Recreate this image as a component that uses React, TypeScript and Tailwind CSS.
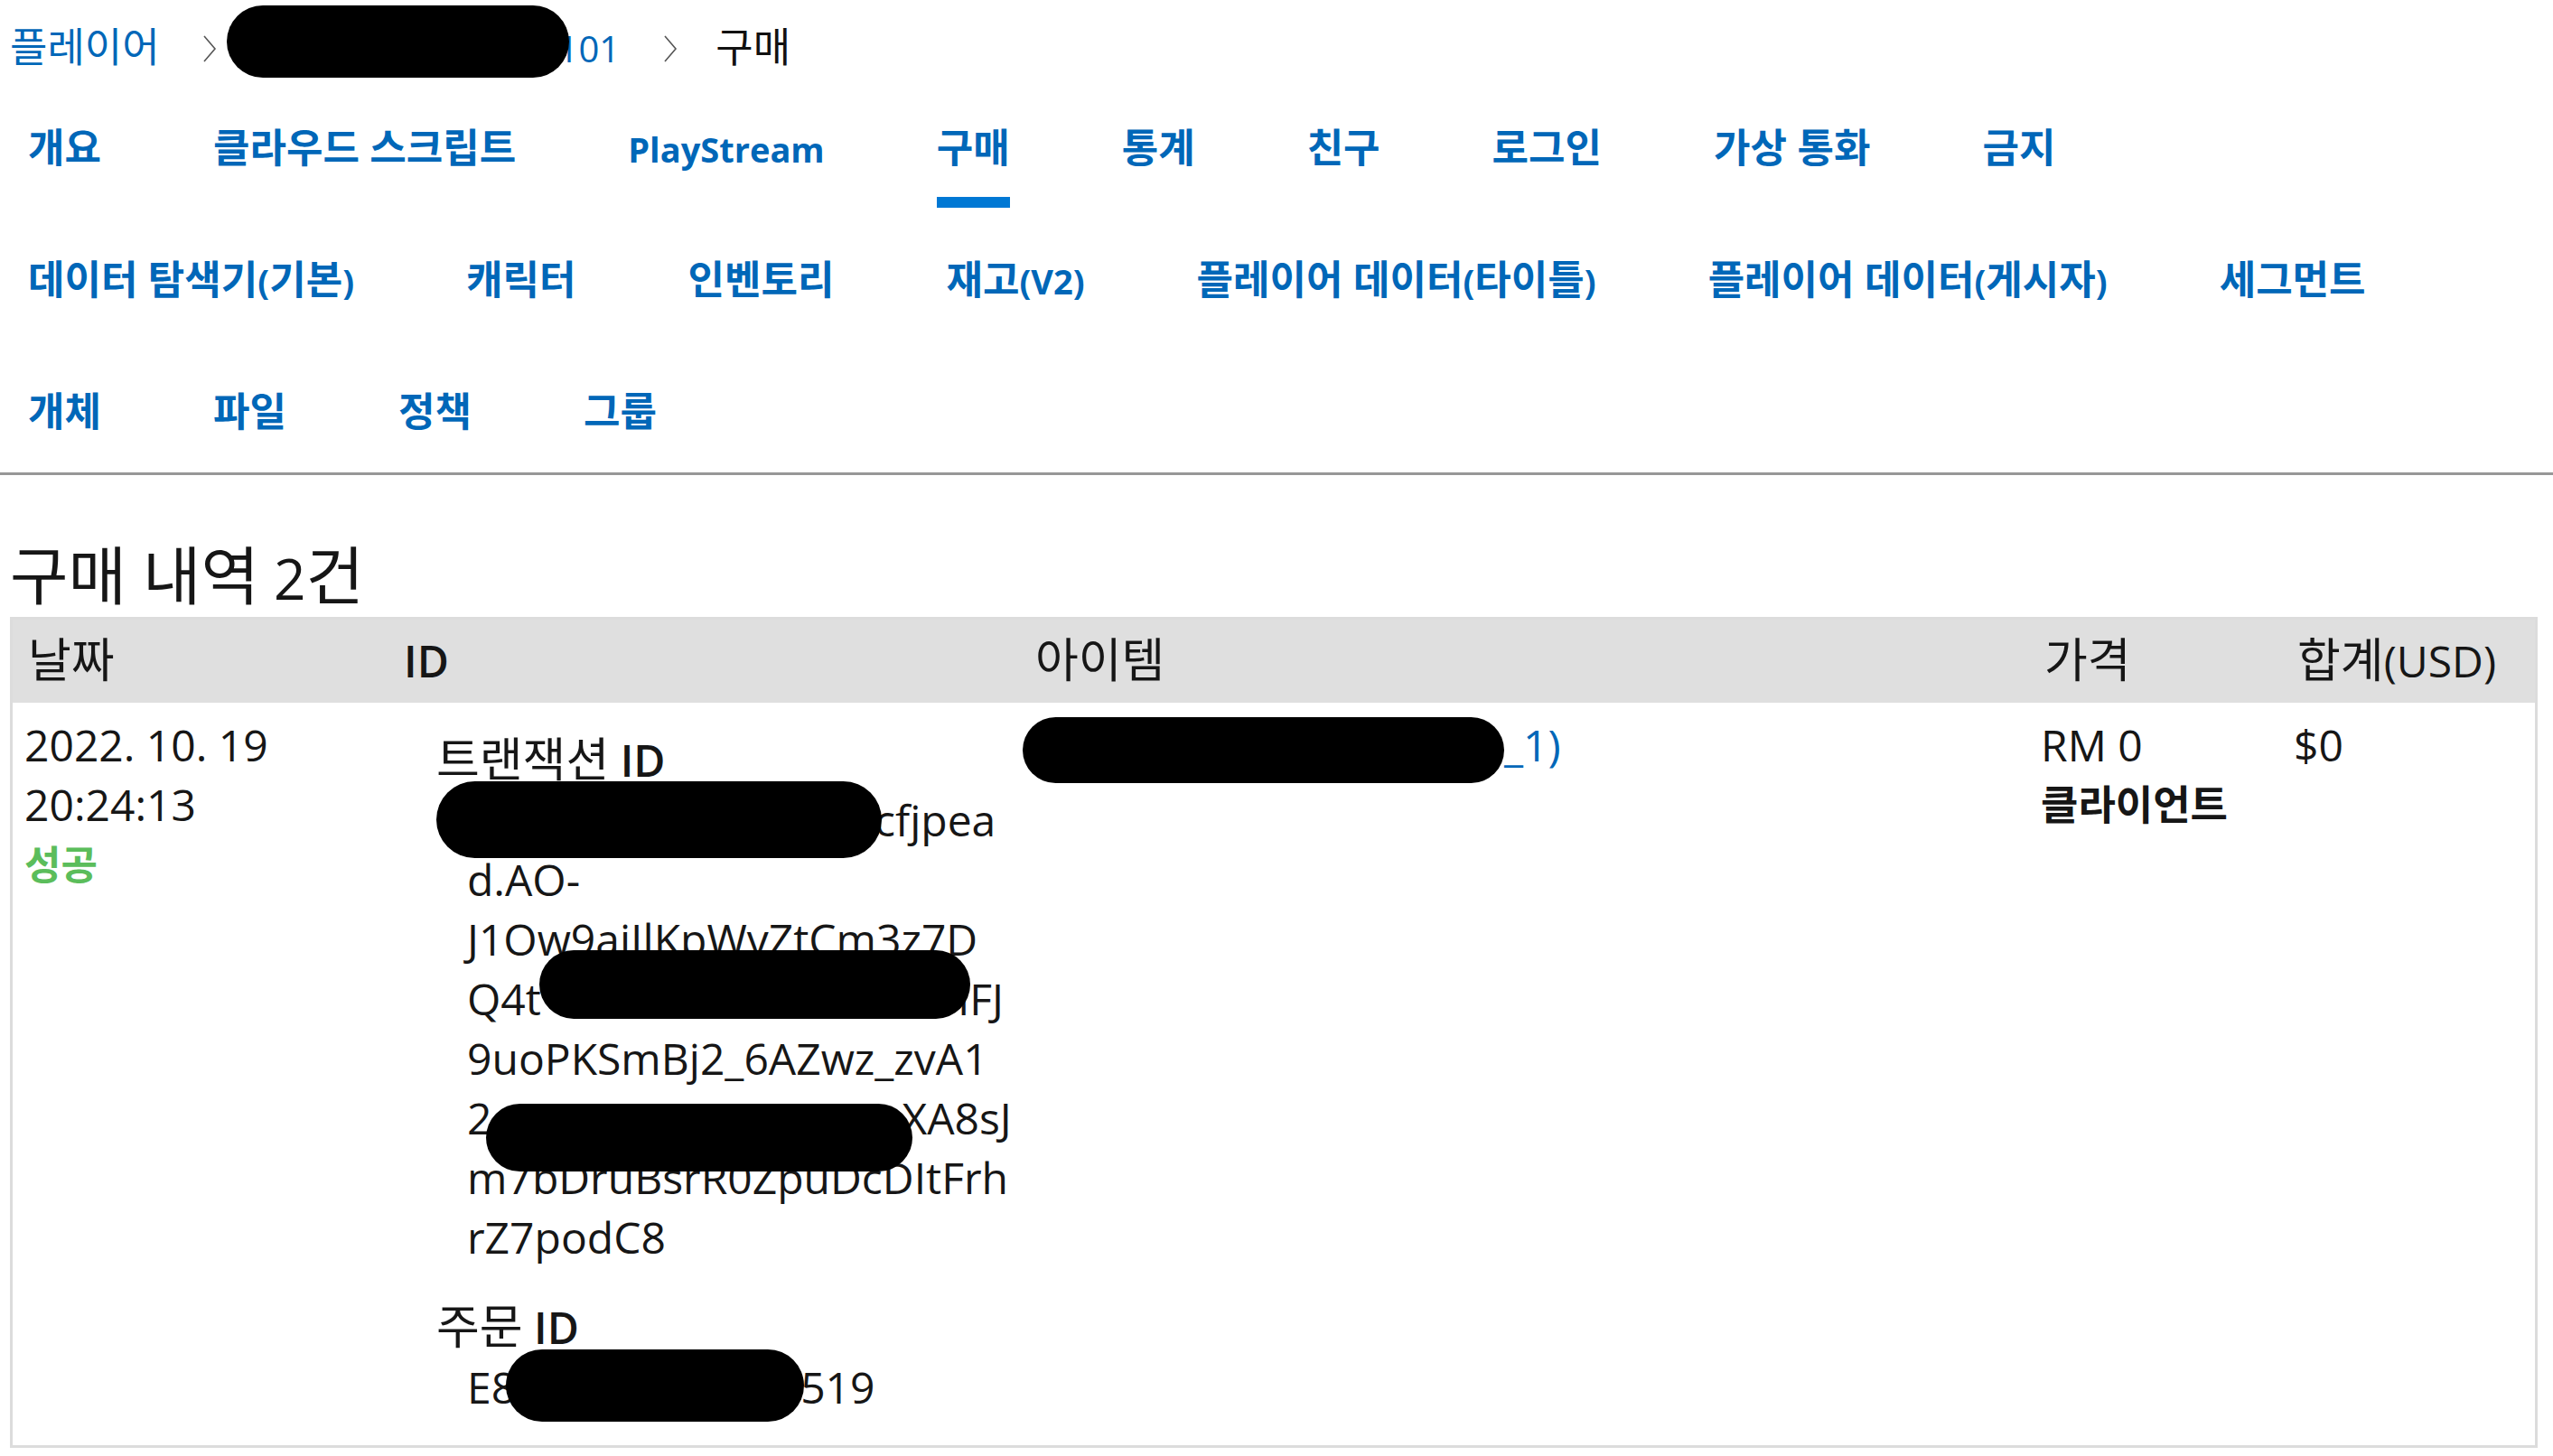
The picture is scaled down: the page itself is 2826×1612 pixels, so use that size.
import React from "react";

const navRows: string[][] = [
  ["개요", "클라우드 스크립트", "PlayStream", "구매", "통계", "친구", "로그인", "가상 통화", "금지"],
  ["데이터 탐색기(기본)", "캐릭터", "인벤토리", "재고(V2)", "플레이어 데이터(타이틀)", "플레이어 데이터(게시자)", "세그먼트"],
  ["개체", "파일", "정책", "그룹"],
];

const activeTab = "구매";

// Hangul glyphs are set a bit larger than the latin ones, as in the original UI font pair
const Mixed = ({ text, hangul }: { text: string; hangul: string }) => (
  <>
    {text.split(/([\uAC00-\uD7A3]+(?: [\uAC00-\uD7A3]+)*)/).map((part, i) =>
      /[\uAC00-\uD7A3]/.test(part) ? (
        <span key={i} className={"leading-none " + hangul}>
          {part}
        </span>
      ) : (
        part
      )
    )}
  </>
);

const Ko = ({ text }: { text: string }) => <Mixed text={text} hangul="text-[1.083em]" />;

// black marker used to hide personal data in the screenshot
const Redact = ({ className }: { className: string }) => (
  <span aria-hidden className={"relative inline-block align-middle bg-black rounded-full " + className} />
);

const Chevron = () => (
  <svg width="16" height="32" viewBox="0 0 16 32" className="shrink-0">
    <polyline points="2,2 14,16 2,30" fill="none" stroke="#555" strokeWidth="1.6" />
  </svg>
);

const Breadcrumb = () => (
  <div className="flex items-center h-[92px] pt-[16px] pl-[11px] text-[40px] leading-[56px]">
    <a className="text-[#0067b8]">
      <Mixed text="플레이어" hangul="text-[1.125em]" />
    </a>
    <span className="ml-[47px] mr-[48px] flex">
      <Chevron />
    </span>
    <a className="text-[#0067b8] whitespace-nowrap">
      <Redact className="w-[379px] h-[80px] my-[-20px] ml-[-37px] mr-[-12px] top-[-12px]" />
      101
    </a>
    <span className="ml-[48px] mr-[42px] flex">
      <Chevron />
    </span>
    <span className="text-[#111]">
      <Mixed text="구매" hangul="text-[1.125em]" />
    </span>
  </div>
);

const Tabs = () => (
  <nav className="border-b-[3px] border-[#979797] pb-[1px]">
    <div className="flex flex-col gap-[8px] pl-[11px]">
      {navRows.map((row, r) => (
        <div key={r} className="flex gap-[84px]">
          {row.map((label) => (
            <a
              key={label}
              className="flex flex-col h-[138px] px-[20px] pt-[45px] text-[38px] leading-[56px] font-bold text-[#0067b8] whitespace-nowrap cursor-pointer"
            >
              <span>
                <Mixed text={label} hangul="text-[1.158em]" />
              </span>
              <span className={"mt-auto h-[12px] " + (label === activeTab ? "bg-[#0078d4]" : "bg-transparent")} />
            </a>
          ))}
        </div>
      ))}
    </div>
  </nav>
);

const PurchaseTable = () => (
  <table className="table-fixed w-[2798px] border-separate border-spacing-0 border-[3px] border-[#dcdcdc] text-[48px] leading-[66px] text-[#161616]">
    <colgroup>
      <col className="w-[416px]" />
      <col className="w-[699px]" />
      <col className="w-[1117px]" />
      <col className="w-[280px]" />
      <col className="w-[280px]" />
    </colgroup>
    <thead>
      <tr className="bg-[#dfdfdf]">
        <th className="text-left font-normal pl-[17px] py-[13px]">
          <Ko text="날짜" />
        </th>
        <th className="text-left font-semibold pl-[17px] py-[13px]">ID</th>
        <th className="text-left font-normal pl-[17px] py-[13px]">
          <Ko text="아이템" />
        </th>
        <th className="text-left font-normal pl-[17px] py-[13px]">
          <Ko text="가격" />
        </th>
        <th className="text-left font-normal pl-[17px] py-[13px] whitespace-nowrap">
          <Ko text="합계" />
          <span className="font-medium">(USD)</span>
        </th>
      </tr>
    </thead>
    <tbody>
      <tr>
        <td className="align-top pl-[13px] py-[14px]">
          <div>2022. 10. 19</div>
          <div>20:24:13</div>
          <div className="font-bold text-[44px] text-[#5bbd5b]">성공</div>
        </td>
        <td className="align-top pl-[13px] py-[14px]">
          <dl className="my-[17px] ml-[40px]">
            <dt>
              <Ko text="트랜잭션" /> <span className="font-semibold">ID</span>
            </dt>
            <dd className="ml-[34px] whitespace-nowrap">
              <div>
                <Redact className="w-[493px] h-[85px] my-[-25px] ml-[-34px] mr-[-8px] top-[-6px]" />
                cfjpea
              </div>
              <div>d.AO-</div>
              <div>J1Ow9aiIlKpWvZtCm3z7D</div>
              <div>
                Q4t
                <Redact className="w-[477px] h-[76px] my-[-20px] ml-[-2px] mr-[-14px] top-[-21px]" />
                IFJ
              </div>
              <div>9uoPKSmBj2_6AZwz_zvA1</div>
              <div>
                2
                <Redact className="w-[472px] h-[75px] my-[-20px] ml-[-6px] mr-[-12px] top-[16px]" />
                XA8sJ
              </div>
              <div>m7bDruBsrR0ZpuDcDItFrh</div>
              <div>rZ7podC8</div>
            </dd>
            <dt className="mt-[34px]">
              <Ko text="주문" /> <span className="font-semibold">ID</span>
            </dt>
            <dd className="ml-[34px] whitespace-nowrap">
              E8
              <Redact className="w-[330px] h-[80px] my-[-20px] ml-[-11px] mr-[-4px] top-[-7px]" />
              519
            </dd>
          </dl>
        </td>
        <td className="align-top pl-[13px] py-[14px]">
          <a className="text-[#0067b8] whitespace-nowrap">
            <Redact className="w-[533px] h-[73px] my-[-20px] ml-[-10px]" />
            _1)
          </a>
        </td>
        <td className="align-top pl-[13px] py-[14px]">
          <div>RM 0</div>
          <div className="font-bold text-[45px]">클라이언트</div>
        </td>
        <td className="align-top pl-[13px] py-[14px]">
          <div>$0</div>
        </td>
      </tr>
    </tbody>
  </table>
);

export default function App() {
  return (
    <div className="min-h-screen bg-white font-['Open_Sans','Noto_Sans_CJK_KR',sans-serif] text-[#161616]">
      <Breadcrumb />
      <Tabs />
      <section className="pl-[11px]">
        <h1 className="mt-[71px] text-[62px] leading-[86px] font-normal text-[#161616]">
          <Mixed text="구매 내역" hangul="text-[1.13em]" /> 2<Mixed text="건" hangul="text-[1.13em]" />
        </h1>
        <PurchaseTable />
      </section>
    </div>
  );
}
